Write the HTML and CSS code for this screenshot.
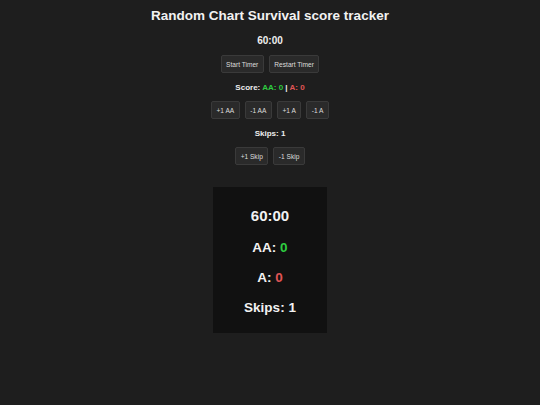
FILE: index.html
```html
<!DOCTYPE html>
<html>
<head>
  <meta charset="UTF-8">
  <title>Random Chart Survival score tracker</title>
  <link rel="stylesheet" href="styles.css">
</head>
<body>
  <div class="tracker">
    <h1>Random Chart Survival score tracker</h1>
    <div class="timer" id="timer">60:00</div>
    <div class="buttons">
      <button id="start">Start Timer</button>
      <button id="restart">Restart Timer</button>
    </div>
    <div class="score">Score: <span class="aa">AA: <span id="aa">0</span></span> | <span class="a">A: <span id="a">0</span></span></div>
    <div class="buttons">
      <button data-key="aa" data-step="1">+1 AA</button>
      <button data-key="aa" data-step="-1">-1 AA</button>
      <button data-key="a" data-step="1">+1 A</button>
      <button data-key="a" data-step="-1">-1 A</button>
    </div>
    <div class="skips">Skips: <span id="skips">1</span></div>
    <div class="buttons">
      <button data-key="skips" data-step="1">+1 Skip</button>
      <button data-key="skips" data-step="-1">-1 Skip</button>
    </div>
  </div>

  <!-- Panel para captura en OBS -->
  <div class="overlay">
    <div class="overlay-timer" id="o-timer">60:00</div>
    <div class="overlay-line">AA: <span class="aa" id="o-aa">0</span></div>
    <div class="overlay-line">A: <span class="a" id="o-a">0</span></div>
    <div class="overlay-line">Skips: <span id="o-skips">1</span></div>
  </div>

  <script>
    const state = { aa: 0, a: 0, skips: 1 };
    let seconds = 3600;
    let interval = null;

    function fmt(s) {
      const m = Math.floor(s / 60);
      const r = s % 60;
      return String(m).padStart(2, '0') + ':' + String(r).padStart(2, '0');
    }

    function render() {
      document.getElementById('timer').textContent = fmt(seconds);
      document.getElementById('o-timer').textContent = fmt(seconds);
      ['aa', 'a', 'skips'].forEach(k => {
        document.getElementById(k).textContent = state[k];
        document.getElementById('o-' + k).textContent = state[k];
      });
    }

    document.querySelectorAll('button[data-key]').forEach(btn => {
      btn.addEventListener('click', () => {
        const k = btn.dataset.key;
        state[k] = Math.max(0, state[k] + Number(btn.dataset.step));
        render();
      });
    });

    document.getElementById('start').addEventListener('click', () => {
      if (interval) return;
      interval = setInterval(() => {
        if (seconds > 0) seconds--;
        render();
      }, 1000);
    });

    document.getElementById('restart').addEventListener('click', () => {
      clearInterval(interval);
      interval = null;
      seconds = 3600;
      render();
    });

    render();
  </script>
</body>
</html>
```

FILE: styles.css
```css
body {
  font-family: "Liberation Sans", Arial, sans-serif;
  background-color: #1e1e1e;
  color: #eee;
  margin: 0;
  padding: 8px 0 0;
  display: flex;
  flex-direction: column;
  align-items: center;
}

.tracker {
  display: flex;
  flex-direction: column;
  align-items: center;
  font-weight: bold;
}

h1 {
  font-size: 13.5px;
  margin: 0;
  color: #f2f2f2;
}

.timer {
  font-size: 10px;
  margin-top: 12px;
}

.score,
.skips {
  font-size: 8px;
  margin-top: 10px;
}

.buttons {
  display: flex;
  gap: 5px;
  margin-top: 9px;
}

button {
  font-family: "Liberation Sans", Arial, sans-serif;
  font-size: 6.6px;
  color: #ddd;
  background-color: #2a2a2a;
  border: 1px solid #3a3a3a;
  border-radius: 2px;
  height: 18px;
  padding: 0 4.5px;
  cursor: pointer;
}

.aa {
  color: #2ecc40;
}

.a {
  color: #e05555;
}

.overlay {
  margin-top: 22px;
  width: 114px;
  height: 146px;
  box-sizing: border-box;
  padding-top: 20px;
  background-color: #111;
  display: flex;
  flex-direction: column;
  align-items: center;
  gap: 13px;
  font-weight: bold;
  font-size: 13.5px;
  line-height: 17px;
  color: #f2f2f2;
}

.overlay-timer {
  font-size: 15px;
  margin-bottom: 2px;
}
```
